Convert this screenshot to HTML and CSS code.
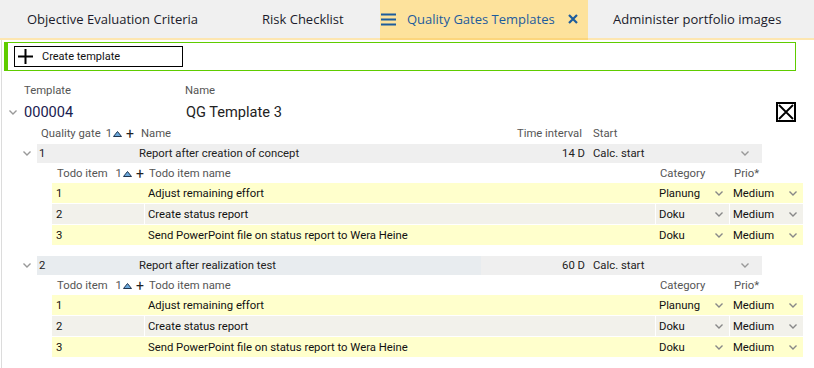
FILE: index.html
```html
<!DOCTYPE html>
<html lang="en">
    <head>
        <meta charset="UTF-8">
        <title>Quality Gates Templates</title>
        <link rel="stylesheet" href="styles.css">
    </head>
    <body>
        <div class="tabs">
            <div class="tab tab-1">Objective Evaluation Criteria</div>
            <div class="tab tab-2">Risk Checklist</div>
            <div class="tab active">
                <svg class="menu-icon" width="15" height="13" viewBox="0 0 15 13"><path d="M0 1.5h15M0 6.5h15M0 11.5h15" stroke="#1d5c9c" stroke-width="2.2"/></svg>
                <span>Quality Gates Templates</span>
                <svg class="close-icon" width="10" height="10" viewBox="0 0 10 10"><path d="M1 1l8 8M9 1l-8 8" stroke="#1d5c9c" stroke-width="2.2"/></svg>
            </div>
            <div class="tab tab-4">Administer portfolio images</div>
        </div>
        <div class="panel">
            <div class="toolbar">
                <button class="create">
                    <svg width="15" height="15" viewBox="0 0 15 15"><path d="M7.5 0v15M0 7.5h15" stroke="#000" stroke-width="2"/></svg>
                    Create template
                </button>
            </div>
            <div class="tpl-labels">
                <span class="lbl-template">Template</span>
                <span class="lbl-name">Name</span>
            </div>
            <div class="tpl-values">
                <svg class="chev" width="8" height="5" viewBox="0 0 8 5"><path d="M0.5 0.5l3.5 3.5 3.5-3.5" fill="none" stroke="#999" stroke-width="1.4"/></svg>
                <span class="tpl-id">000004</span>
                <span class="tpl-name">QG Template 3</span>
                <span class="checkbox"><svg width="20" height="20" viewBox="0 0 20 20"><rect x="1" y="1" width="18" height="18" fill="#fff" stroke="#000" stroke-width="2"/><path d="M3 3l14 14M17 3l-14 14" stroke="#000" stroke-width="1.8"/></svg></span>
            </div>

            <div class="gate-head">
                <span class="c-num">Quality gate <span class="sort">1<svg width="9" height="6" viewBox="0 0 9 6"><path d="M0.5 5.5l4-5 4 5z" fill="#6aa8dc" stroke="#1f3550" stroke-width="1"/></svg></span><span class="add">+</span></span>
                <span class="c-name">Name</span>
                <span class="c-time">Time interval</span>
                <span class="c-start">Start</span>
            </div>

            <div class="gate">
                <div class="gate-line">
                    <svg class="chev" width="8" height="5" viewBox="0 0 8 5"><path d="M0.5 0.5l3.5 3.5 3.5-3.5" fill="none" stroke="#999" stroke-width="1.4"/></svg>
                    <div class="gate-row">
                        <span class="c-num">1</span>
                        <span class="c-name">Report after creation of concept</span>
                        <span class="c-time">14 D</span>
                        <span class="c-start">Calc. start <svg class="chev" width="8" height="5" viewBox="0 0 8 5"><path d="M0.5 0.5l3.5 3.5 3.5-3.5" fill="none" stroke="#999" stroke-width="1.4"/></svg></span>
                    </div>
                </div>
                <div class="todo-head">
                    <span class="t-num">Todo item <span class="sort">1<svg width="9" height="6" viewBox="0 0 9 6"><path d="M0.5 5.5l4-5 4 5z" fill="#6aa8dc" stroke="#1f3550" stroke-width="1"/></svg></span><span class="add">+</span></span>
                    <span class="t-name">Todo item name</span>
                    <span class="t-cat">Category</span>
                    <span class="t-prio">Prio*</span>
                </div>
                <div class="todo-row">
                    <span>1</span><span>Adjust remaining effort</span>
                    <span class="select">Planung<svg width="8" height="5" viewBox="0 0 8 5"><path d="M0.5 0.5l3.5 3.5 3.5-3.5" fill="none" stroke="#888" stroke-width="1.4"/></svg></span>
                    <span class="select">Medium<svg width="8" height="5" viewBox="0 0 8 5"><path d="M0.5 0.5l3.5 3.5 3.5-3.5" fill="none" stroke="#888" stroke-width="1.4"/></svg></span>
                </div>
                <div class="todo-row alt">
                    <span>2</span><span>Create status report</span>
                    <span class="select">Doku<svg width="8" height="5" viewBox="0 0 8 5"><path d="M0.5 0.5l3.5 3.5 3.5-3.5" fill="none" stroke="#888" stroke-width="1.4"/></svg></span>
                    <span class="select">Medium<svg width="8" height="5" viewBox="0 0 8 5"><path d="M0.5 0.5l3.5 3.5 3.5-3.5" fill="none" stroke="#888" stroke-width="1.4"/></svg></span>
                </div>
                <div class="todo-row">
                    <span>3</span><span>Send PowerPoint file on status report to Wera Heine</span>
                    <span class="select">Doku<svg width="8" height="5" viewBox="0 0 8 5"><path d="M0.5 0.5l3.5 3.5 3.5-3.5" fill="none" stroke="#888" stroke-width="1.4"/></svg></span>
                    <span class="select">Medium<svg width="8" height="5" viewBox="0 0 8 5"><path d="M0.5 0.5l3.5 3.5 3.5-3.5" fill="none" stroke="#888" stroke-width="1.4"/></svg></span>
                </div>
            </div>

            <div class="gate">
                <div class="gate-line">
                    <svg class="chev" width="8" height="5" viewBox="0 0 8 5"><path d="M0.5 0.5l3.5 3.5 3.5-3.5" fill="none" stroke="#999" stroke-width="1.4"/></svg>
                    <div class="gate-row hover">
                        <span class="c-num">2</span>
                        <span class="c-name">Report after realization test</span>
                        <span class="c-time">60 D</span>
                        <span class="c-start">Calc. start <svg class="chev" width="8" height="5" viewBox="0 0 8 5"><path d="M0.5 0.5l3.5 3.5 3.5-3.5" fill="none" stroke="#999" stroke-width="1.4"/></svg></span>
                    </div>
                </div>
                <div class="todo-head">
                    <span class="t-num">Todo item <span class="sort">1<svg width="9" height="6" viewBox="0 0 9 6"><path d="M0.5 5.5l4-5 4 5z" fill="#6aa8dc" stroke="#1f3550" stroke-width="1"/></svg></span><span class="add">+</span></span>
                    <span class="t-name">Todo item name</span>
                    <span class="t-cat">Category</span>
                    <span class="t-prio">Prio*</span>
                </div>
                <div class="todo-row">
                    <span>1</span><span>Adjust remaining effort</span>
                    <span class="select">Planung<svg width="8" height="5" viewBox="0 0 8 5"><path d="M0.5 0.5l3.5 3.5 3.5-3.5" fill="none" stroke="#888" stroke-width="1.4"/></svg></span>
                    <span class="select">Medium<svg width="8" height="5" viewBox="0 0 8 5"><path d="M0.5 0.5l3.5 3.5 3.5-3.5" fill="none" stroke="#888" stroke-width="1.4"/></svg></span>
                </div>
                <div class="todo-row alt">
                    <span>2</span><span>Create status report</span>
                    <span class="select">Doku<svg width="8" height="5" viewBox="0 0 8 5"><path d="M0.5 0.5l3.5 3.5 3.5-3.5" fill="none" stroke="#888" stroke-width="1.4"/></svg></span>
                    <span class="select">Medium<svg width="8" height="5" viewBox="0 0 8 5"><path d="M0.5 0.5l3.5 3.5 3.5-3.5" fill="none" stroke="#888" stroke-width="1.4"/></svg></span>
                </div>
                <div class="todo-row">
                    <span>3</span><span>Send PowerPoint file on status report to Wera Heine</span>
                    <span class="select">Doku<svg width="8" height="5" viewBox="0 0 8 5"><path d="M0.5 0.5l3.5 3.5 3.5-3.5" fill="none" stroke="#888" stroke-width="1.4"/></svg></span>
                    <span class="select">Medium<svg width="8" height="5" viewBox="0 0 8 5"><path d="M0.5 0.5l3.5 3.5 3.5-3.5" fill="none" stroke="#888" stroke-width="1.4"/></svg></span>
                </div>
            </div>
        </div>
    </body>
</html>
```

FILE: styles.css
```css
html { height: 100%; }
body {
    margin: 0;
    height: 100%;
    font-family: Roboto, "Liberation Sans", sans-serif;
    font-size: 11.3px;
    color: #222;
    background-color: #fff;
    display: flex;
    flex-direction: column;
    overflow: hidden;
}
svg { display: block; }

/* tab strip */
.tabs {
    display: flex;
    height: 38px;
    background-color: #f0f0f0;
    border-bottom: 2px solid #fde6b0;
    font-family: "Open Sans", sans-serif;
    font-size: 13px;
    color: #1b1b2b;
}
.tab {
    display: flex;
    align-items: center;
    white-space: nowrap;
}
.tab-1 { padding-left: 27px; width: 208px; }
.tab-2 { padding-left: 27px; width: 118px; }
.tab-4 { padding-left: 25px; }
.active {
    background-color: #fde29c;
    color: #1d5c9c;
    width: 208px;
    box-sizing: border-box;
    padding-left: 1px;
    margin-bottom: -2px;
    border-bottom: 2px solid #fcd67d;
}
.active span { margin-left: 11px; }
.close-icon { margin-left: 13px; }

/* content */
.panel {
    flex-grow: 1;
    margin-left: 1px;
    border-left: 1px solid #dcdcdc;
    padding: 2px 0 0 2px;
}
.toolbar {
    width: 781px;
    height: 20px;
    padding: 3px 0 4px 6px;
    border: 1px solid #5fcc00;
    border-left: 4px solid #5fcc00;
}
.create {
    display: flex;
    align-items: center;
    gap: 9px;
    width: 169px;
    height: 21px;
    padding: 0 0 0 3px;
    border: 1px solid #000;
    background: #fff;
    font-family: Roboto, sans-serif;
    font-size: 11px;
    color: #111;
}

.tpl-labels {
    display: flex;
    height: 18px;
    line-height: 18px;
    margin-top: 11px;
    color: #555;
}
.lbl-template { margin-left: 20px; width: 161px; }
.tpl-values {
    display: flex;
    align-items: center;
    height: 24px;
    font-size: 14.6px;
    color: #1a2050;
}
.tpl-values .chev { margin-left: 5px; }
.tpl-id { margin-left: 7px; width: 162px; }
.tpl-name { flex-grow: 1; color: #222; }
.checkbox { margin-right: 18px; }

/* quality gates */
.gate-head, .gate-row {
    display: grid;
    grid-template-columns: 102px 342px 108px 173px;
    height: 19px;
    align-items: center;
    white-space: nowrap;
}
.gate-head {
    margin-left: 32px;
    width: 725px;
    color: #555;
}
.c-num { padding-left: 2px; display: flex; align-items: center; }
.gate-head .c-num { padding-left: 5px; }
.c-name { padding-left: 0; }
.gate-head .c-name { padding-left: 3px; }
.c-time { text-align: right; padding-right: 4px; }
.gate-head .c-time { padding-right: 6px; }
.c-start { display: flex; align-items: center; justify-content: space-between; padding: 0 7px 0 4px; }
.gate-head .c-start { padding-left: 5px; }
.sort { display: inline-flex; align-items: center; margin-left: 5px; gap: 1px; }
.add { margin-left: 4px; font-size: 14px; color: #222; }

.gate { margin-bottom: 11px; }
.gate-line {
    display: flex;
    align-items: center;
    margin-top: 1px;
}
.gate-line .chev { margin: 0 6px 0 19px; }
.gate-row {
    width: 725px;
    background-color: #efefef;
}
.gate-row.hover .c-num, .gate-row.hover .c-name {
    background-color: #e8ecef;
    height: 100%;
    display: flex;
    align-items: center;
}

.todo-head, .todo-row {
    display: grid;
    grid-template-columns: 92px 510px 73px 73px;
    column-gap: 1px;
    margin-left: 48px;
    width: 751px;
    align-items: center;
    white-space: nowrap;
}
.todo-head {
    height: 19px;
    margin-top: 1px;
    color: #555;
}
.t-num { padding-left: 5px; display: flex; align-items: center; }
.t-num .sort { margin-left: 8px; }
.t-name { padding-left: 4px; }
.t-cat { padding-left: 4px; }
.t-prio { padding-left: 4px; }
.todo-row {
    height: 20px;
    margin-bottom: 1px;
    background-color: #ffffcc;
    color: #111;
}
.todo-row span { padding-left: 3px; }
.todo-row span:first-child { padding-left: 4px; }
.todo-row.alt { background-color: #fff; }
.todo-row.alt span {
    background-color: #f2f1eb;
    height: 100%;
    display: flex;
    align-items: center;
}
.todo-row .select {
    display: flex;
    align-items: center;
    justify-content: space-between;
    padding-right: 6px;
}
```
